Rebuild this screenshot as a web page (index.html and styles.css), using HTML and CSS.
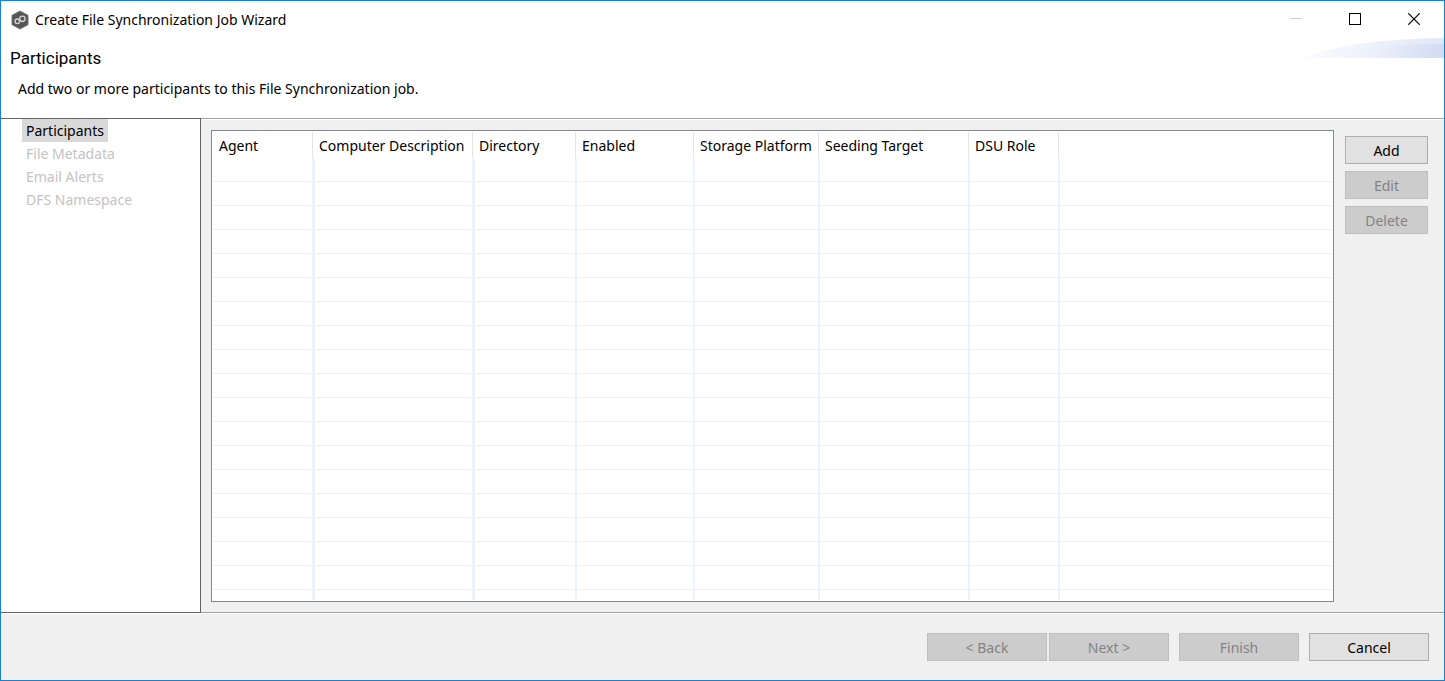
FILE: index.html
```html
<!DOCTYPE html>
<html lang="en">
<head>
<meta charset="utf-8">
<title>Create File Synchronization Job Wizard</title>
<link rel="stylesheet" href="styles.css">
</head>
<body>
<div class="window">
  <header class="titlebar">
    <svg class="app-icon" viewBox="0 0 18 20" aria-hidden="true">
      <path d="M9 1 L17 5.300 V14.700 L9 19 L1 14.700 V5.300 Z" fill="#555" stroke="#777" stroke-width="1" stroke-linejoin="round"/>
      <circle cx="6.300" cy="11.300" r="2.300" fill="none" stroke="#d4d4d4" stroke-width="1.300"/>
      <circle cx="11.400" cy="8.800" r="2.700" fill="none" stroke="#d4d4d4" stroke-width="1.300"/>
    </svg>
    <span class="title">Create File Synchronization Job Wizard</span>
    <button class="control" type="button" aria-label="Minimize" disabled><svg class="glyph" viewBox="0 0 12 12"><path d="M0 5.500H12" stroke="#ccc"/></svg></button>
    <button class="control" type="button" aria-label="Maximize"><svg class="glyph" viewBox="0 0 12 12"><rect x=".5" y=".5" width="11" height="11" fill="none" stroke="#000"/></svg></button>
    <button class="control" type="button" aria-label="Close"><svg class="glyph" viewBox="0 0 12 12"><path d="M.3 .3L11.700 11.700M11.700 .3L.3 11.700" stroke="#000" stroke-width="1.200"/></svg></button>
  </header>

  <section class="banner">
    <h1 class="heading">Participants</h1>
    <p class="message">Add two or more participants to this File Synchronization job.</p>
    <svg class="swoosh" viewBox="0 0 140 20" aria-hidden="true">
      <defs>
        <linearGradient id="upper"><stop offset="0" stop-color="#fafbfe"/><stop offset="1" stop-color="#dfe8f7"/></linearGradient>
        <linearGradient id="lower"><stop offset="0" stop-color="#fafbfe"/><stop offset=".5" stop-color="#ecf0fa"/><stop offset="1" stop-color="#d1dbf3"/></linearGradient>
      </defs>
      <path d="M0 20C10 14 55 1 140 0V20Z" fill="url(#upper)"/>
      <path d="M0 20C25 14 75 6 140 6V20Z" fill="url(#lower)"/>
    </svg>
  </section>

  <main class="main">
    <nav class="steps" aria-label="Wizard steps">
      <ul class="step-list">
        <li class="step step-current" aria-current="step">Participants</li>
        <li class="step">File Metadata</li>
        <li class="step">Email Alerts</li>
        <li class="step">DFS Namespace</li>
      </ul>
    </nav>
    <div class="content">
      <div class="grid-frame">
        <table class="grid">
          <colgroup>
            <col class="c-agent"><col class="c-description"><col class="c-directory"><col class="c-enabled"><col class="c-platform"><col class="c-seeding"><col class="c-role"><col>
          </colgroup>
          <thead>
            <tr><th>Agent</th><th>Computer Description</th><th>Directory</th><th>Enabled</th><th>Storage Platform</th><th>Seeding Target</th><th>DSU Role</th><th></th></tr>
          </thead>
          <tbody>
            <tr><td></td><td class="wide"></td><td class="wide"></td><td></td><td></td><td></td><td></td><td></td></tr>
            <tr><td></td><td class="wide"></td><td class="wide"></td><td></td><td></td><td></td><td></td><td></td></tr>
            <tr><td></td><td class="wide"></td><td class="wide"></td><td></td><td></td><td></td><td></td><td></td></tr>
            <tr><td></td><td class="wide"></td><td class="wide"></td><td></td><td></td><td></td><td></td><td></td></tr>
            <tr><td></td><td class="wide"></td><td class="wide"></td><td></td><td></td><td></td><td></td><td></td></tr>
            <tr><td></td><td class="wide"></td><td class="wide"></td><td></td><td></td><td></td><td></td><td></td></tr>
            <tr><td></td><td class="wide"></td><td class="wide"></td><td></td><td></td><td></td><td></td><td></td></tr>
            <tr><td></td><td class="wide"></td><td class="wide"></td><td></td><td></td><td></td><td></td><td></td></tr>
            <tr><td></td><td class="wide"></td><td class="wide"></td><td></td><td></td><td></td><td></td><td></td></tr>
            <tr><td></td><td class="wide"></td><td class="wide"></td><td></td><td></td><td></td><td></td><td></td></tr>
            <tr><td></td><td class="wide"></td><td class="wide"></td><td></td><td></td><td></td><td></td><td></td></tr>
            <tr><td></td><td class="wide"></td><td class="wide"></td><td></td><td></td><td></td><td></td><td></td></tr>
            <tr><td></td><td class="wide"></td><td class="wide"></td><td></td><td></td><td></td><td></td><td></td></tr>
            <tr><td></td><td class="wide"></td><td class="wide"></td><td></td><td></td><td></td><td></td><td></td></tr>
            <tr><td></td><td class="wide"></td><td class="wide"></td><td></td><td></td><td></td><td></td><td></td></tr>
            <tr><td></td><td class="wide"></td><td class="wide"></td><td></td><td></td><td></td><td></td><td></td></tr>
            <tr><td></td><td class="wide"></td><td class="wide"></td><td></td><td></td><td></td><td></td><td></td></tr>
            <tr><td></td><td class="wide"></td><td class="wide"></td><td></td><td></td><td></td><td></td><td></td></tr>
            <tr class="last"><td></td><td class="wide"></td><td class="wide"></td><td></td><td></td><td></td><td></td><td></td></tr>
          </tbody>
        </table>
      </div>
      <div class="actions">
        <button class="button" type="button">Add</button>
        <button class="button" type="button" disabled>Edit</button>
        <button class="button" type="button" disabled>Delete</button>
      </div>
    </div>
  </main>

  <footer class="footer">
    <div class="pager">
      <button class="button" type="button" disabled>&lt; Back</button>
      <button class="button" type="button" disabled>Next &gt;</button>
    </div>
    <button class="button" type="button" disabled>Finish</button>
    <button class="button" type="button">Cancel</button>
  </footer>
</div>
</body>
</html>
```

FILE: styles.css
```css
* { box-sizing: border-box; }

body {
  margin: 0;
  font-family: "Noto Sans", "Open Sans", sans-serif;
  font-size: 14px;
  line-height: 20px;
  color: #000;
}

.window {
  display: flex;
  flex-direction: column;
  min-height: 100vh;
  border: 1px solid #1a80d4;
  background: #fff;
}

.titlebar {
  display: flex;
  align-items: center;
  height: 37px;
  padding: 0 1px 0 10px;
}
.app-icon { width: 18px; height: 20px; margin-right: 6px; }
.title { flex: 1; }
.control {
  display: flex;
  align-items: center;
  align-self: flex-start;
  justify-content: center;
  width: 59px;
  height: 36px;
  padding: 0;
  border: 0;
  background: none;
}
.glyph { width: 12px; height: 12px; }

.banner {
  position: relative;
  height: 80px;
  padding: 10px 9px;
}
.heading {
  margin: 0;
  font-family: Roboto, "Liberation Sans", sans-serif;
  font-size: 17px;
  font-weight: 400;
  line-height: 20px;
}
.message { margin: 11px 8px 0; }
.swoosh {
  position: absolute;
  top: 0;
  right: 0;
  width: 140px;
  height: 20px;
}

.main {
  display: flex;
  flex: 1;
}
.steps {
  width: 200px;
  border: 1px solid #646464;
  border-left: 0;
}
.step-list {
  display: flex;
  flex-direction: column;
  align-items: flex-start;
  margin: 0;
  padding: 0 0 0 21px;
  list-style: none;
}
.step {
  padding: 0 4px;
  line-height: 23px;
  color: #c3c3c3;
}
.step-current { background: #d9d9d9; color: #000; }

.content {
  display: flex;
  flex: 1;
  gap: 11px;
  min-width: 0;
  padding: 11px 16px 10px 10px;
  border-top: 1px solid #a0a0a0;
  border-bottom: 1px solid #a0a0a0;
  background: #f0f0f0;
  box-shadow: inset 0 1px #fff;
}
.grid-frame {
  flex: 1;
  min-width: 0;
  padding: 1px;
  border: 1px solid #828790;
  background: #fff;
}
.grid {
  width: 100%;
  border-spacing: 0;
  table-layout: fixed;
}
.c-agent { width: 99px; }
.c-description { width: 160px; }
.c-directory { width: 103px; }
.c-enabled { width: 118px; }
.c-platform { width: 125px; }
.c-seeding { width: 150px; }
.c-role { width: 90px; }
.grid th {
  height: 26px;
  padding: 2px 0 0 6px;
  border-left: 1px solid #e5e5e5;
  font-weight: 400;
  text-align: left;
  white-space: nowrap;
}
.grid td {
  height: 24px;
  padding: 0;
  border-bottom: 1px solid #f0f0f0;
  border-left: 2px solid #edf3fc;
}
.grid td.wide { border-left: 3px solid #eaf2fd; }
.grid th:first-child,
.grid td:first-child { border-left: 0; }
.grid .last td { height: 10px; border-bottom: 0; }

.actions {
  display: flex;
  flex-direction: column;
  gap: 7px;
  width: 83px;
  padding-top: 6px;
}
.button {
  height: 28px;
  padding: 2px 0 0;
  border: 1px solid #adadad;
  background: #e1e1e1;
  color: #000;
  font: inherit;
}
.button:disabled {
  border-color: #bfbfbf;
  background: #ccc;
  color: #838383;
}

.footer {
  display: flex;
  justify-content: flex-end;
  gap: 10px;
  padding: 19px 15px;
  border-top: 1px solid #fff;
  background: #f0f0f0;
}
.footer .button { width: 120px; }
.pager { display: flex; gap: 2px; }
```
